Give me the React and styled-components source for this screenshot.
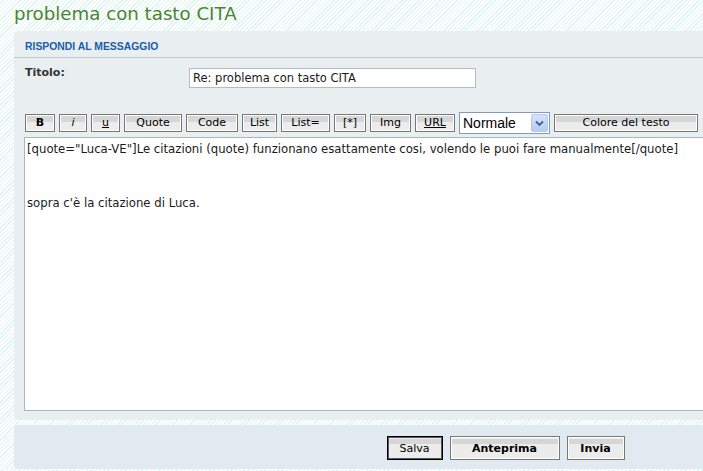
import React from "react";
import styled, { createGlobalStyle, css } from "styled-components";

const GlobalStyle = createGlobalStyle`
  html, body {
    margin: 0;
    padding: 0;
  }
  body {
    overflow: hidden;
    font-family: "DejaVu Sans", Verdana, sans-serif;
    background-color: #ffffff;
    background-image: repeating-linear-gradient(
      135deg,
      #ffffff 0px,
      #ffffff 2px,
      #dcf5f1 2px,
      #dcf5f1 3px
    );
  }
`;

const Page = styled.div`
  width: 983px;
  padding: 0 0 0 14px;
`;

const Title = styled.h1`
  margin: 0 0 3px 0;
  font-family: "DejaVu Sans", Verdana, sans-serif;
  font-weight: normal;
  font-size: 18.2px;
  line-height: 28px;
  color: #4b8530;
`;

const ReplyPanel = styled.div`
  background: #e9eef1;
  border-radius: 4px;
  padding: 0 0 9px 10px;
`;

const PanelHeading = styled.div`
  margin-left: -10px;
  padding: 9px 11px 3px 11px;
  font-family: "Liberation Sans", Arial, sans-serif;
  font-weight: bold;
  font-size: 10.4px;
  line-height: 14px;
  color: #1a5ca8;
  border-bottom: 1px solid #c3c9ce;
`;

const FieldRow = styled.div`
  display: flex;
  align-items: flex-start;
  padding: 8px 0 0 1px;
`;

const FieldLabel = styled.label`
  width: 164px;
  font-weight: bold;
  font-size: 11px;
  line-height: 14px;
  color: #333333;
`;

const TextInput = styled.input`
  box-sizing: border-box;
  margin: 2px 0 0 0;
  width: 287px;
  height: 20px;
  padding: 0 3px;
  border: 1px solid #b6bbc2;
  background: #ffffff;
  font-family: "DejaVu Sans", Verdana, sans-serif;
  font-size: 11.5px;
  color: #1a1a1a;
  outline: none;
`;

const Toolbar = styled.div`
  display: flex;
  align-items: center;
  gap: 4px;
  height: 22px;
  margin: 24px 0 3px 1px;
`;

const ToolButton = styled.button`
  box-sizing: border-box;
  width: ${(p) => p.$w}px;
  height: 18px;
  padding: 0;
  border: 1px solid #777777;
  box-shadow: inset 1px 1px 0 #ffffff, inset -1px -1px 0 #ffffff;
  background: linear-gradient(
    to bottom,
    #d6d6d6 0,
    #d6d6d6 7px,
    #ececec 7px,
    #ececec 100%
  );
  font-family: "DejaVu Sans", Verdana, sans-serif;
  font-size: 11px;
  line-height: 14px;
  color: #000000;
  cursor: pointer;
  ${(p) => p.$bold && css`font-weight: bold;`}
  ${(p) => p.$italic && css`font-style: italic;`}
  ${(p) => p.$underline && css`text-decoration: underline;`}
`;

const SelectWrap = styled.div`
  position: relative;
  box-sizing: border-box;
  width: 91px;
  height: 22px;
  border: 1px solid #7f9db9;
  background: #ffffff;
`;

const SizeSelect = styled.select`
  appearance: none;
  -webkit-appearance: none;
  width: 100%;
  height: 100%;
  border: none;
  outline: none;
  background: transparent;
  padding: 0 0 0 3px;
  font-family: "Liberation Sans", Arial, sans-serif;
  font-size: 14px;
  color: #000000;
`;

const SelectArrow = styled.span`
  position: absolute;
  top: 1px;
  right: 1px;
  width: 17px;
  height: 18px;
  box-sizing: border-box;
  border: 1px solid #b7c9ef;
  border-radius: 2px;
  background: linear-gradient(to bottom, #d5e1fb, #b6cbf6);
  display: flex;
  align-items: center;
  justify-content: center;
  pointer-events: none;
`;

const Editor = styled.textarea`
  display: block;
  box-sizing: border-box;
  width: 963px;
  height: 274px;
  margin: 0;
  padding: 5px 2px;
  border: 1px solid #aeb4bb;
  background: #ffffff;
  font-family: "DejaVu Sans", Verdana, sans-serif;
  font-size: 11.7px;
  line-height: 13.5px;
  color: #1a1a1a;
  resize: none;
  outline: none;
`;

const ActionBar = styled.div`
  margin-top: 5px;
  background: #e0eaf0;
  border-radius: 4px;
  display: flex;
  justify-content: center;
  gap: 7px;
  padding: 11px 0 9px 0;
`;

const ActionButton = styled.button`
  box-sizing: border-box;
  width: ${(p) => p.$w}px;
  height: 24px;
  padding: 0;
  border: 1px solid #777777;
  box-shadow: inset 1px 1px 0 #ffffff, inset -1px -1px 0 #ffffff;
  background: linear-gradient(
    to bottom,
    #ececec 0,
    #ececec 2px,
    #d6d6d6 2px,
    #d6d6d6 7px,
    #ececec 7px,
    #ececec 100%
  );
  font-family: "DejaVu Sans", Verdana, sans-serif;
  font-size: 11px;
  font-weight: ${(p) => (p.$primary ? "bold" : "normal")};
  color: #000000;
  cursor: pointer;
  ${(p) =>
    p.$default &&
    css`
      border: 1px solid #000000;
      box-shadow: inset 0 0 0 1px #5a5a5a;
    `}
`;

const bbcodeButtons = [
  { label: "B", w: 30, bold: true },
  { label: "i", w: 28, italic: true },
  { label: "u", w: 29, underline: true },
  { label: "Quote", w: 58 },
  { label: "Code", w: 52 },
  { label: "List", w: 35 },
  { label: "List=", w: 49 },
  { label: "[*]", w: 32 },
  { label: "Img", w: 41 },
  { label: "URL", w: 40, underline: true },
];

const message =
  '[quote="Luca-VE"]Le citazioni (quote) funzionano esattamente cosi, volendo le puoi fare manualmente[/quote]\n\n\n\nsopra c\'è la citazione di Luca.';

export default function App() {
  return (
    <>
      <GlobalStyle />
      <Page>
        <Title>problema con tasto CITA</Title>
        <ReplyPanel>
          <PanelHeading>RISPONDI AL MESSAGGIO</PanelHeading>
          <FieldRow>
            <FieldLabel htmlFor="subject">Titolo:</FieldLabel>
            <TextInput
              id="subject"
              defaultValue="Re: problema con tasto CITA"
            />
          </FieldRow>
          <Toolbar>
            {bbcodeButtons.map((b) => (
              <ToolButton
                key={b.label}
                $w={b.w}
                $bold={b.bold}
                $italic={b.italic}
                $underline={b.underline}
              >
                {b.label}
              </ToolButton>
            ))}
            <SelectWrap>
              <SizeSelect defaultValue="normal">
                <option value="small">Piccolo</option>
                <option value="normal">Normale</option>
                <option value="large">Grande</option>
              </SizeSelect>
              <SelectArrow>
                <svg width="9" height="7" viewBox="0 0 9 7">
                  <path
                    d="M1 1.5 L4.5 5 L8 1.5"
                    fill="none"
                    stroke="#4d6185"
                    strokeWidth="1.8"
                  />
                </svg>
              </SelectArrow>
            </SelectWrap>
            <ToolButton $w={144}>Colore del testo</ToolButton>
          </Toolbar>
          <Editor defaultValue={message} />
        </ReplyPanel>
        <ActionBar>
          <ActionButton $w={56} $default>
            Salva
          </ActionButton>
          <ActionButton $w={110} $primary>
            Anteprima
          </ActionButton>
          <ActionButton $w={58} $primary>
            Invia
          </ActionButton>
        </ActionBar>
      </Page>
    </>
  );
}
